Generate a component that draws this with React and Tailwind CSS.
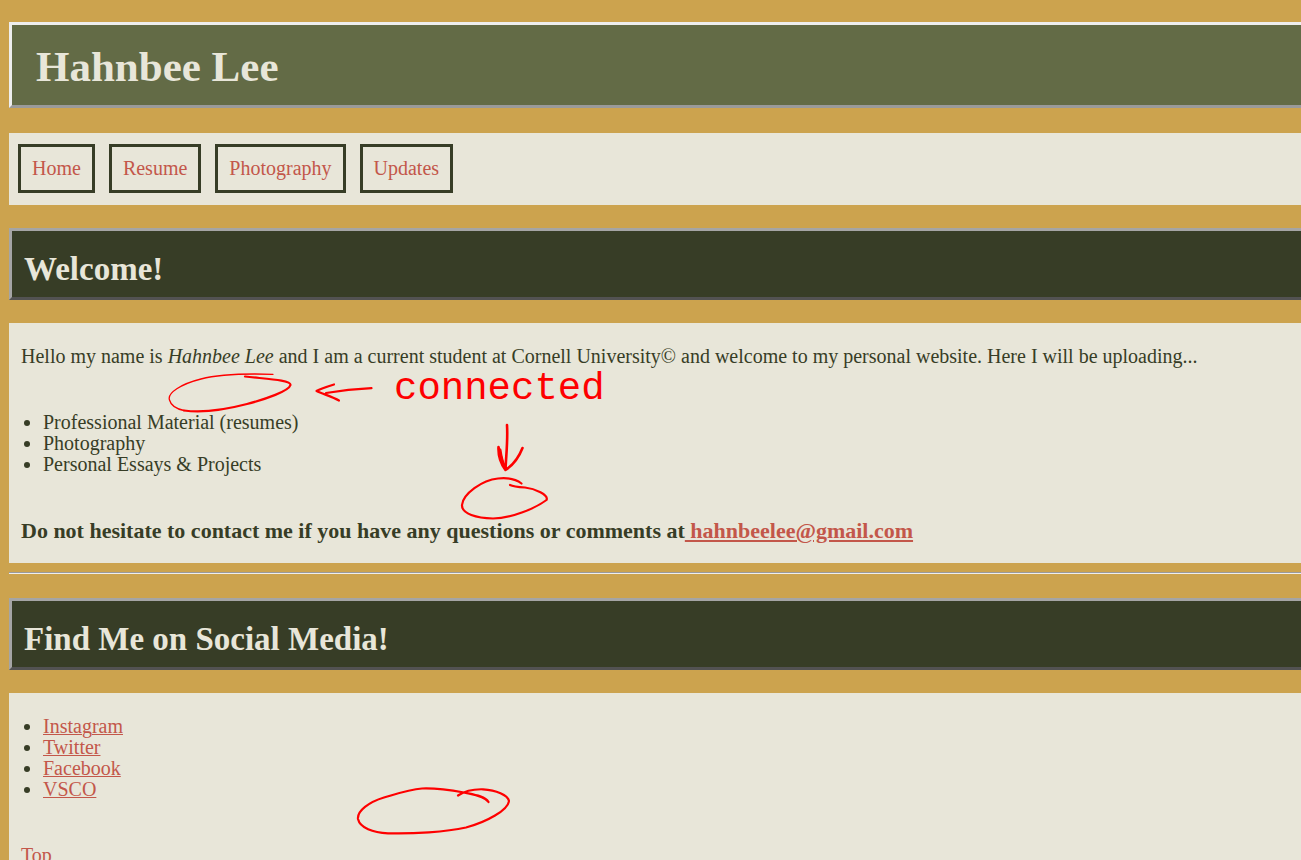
const pages = ["Home", "Resume", "Photography", "Updates"];
const uploads = ["Professional Material (resumes)", "Photography", "Personal Essays & Projects"];
const socials = ["Instagram", "Twitter", "Facebook", "VSCO"];

function SectionTitle({ children }) {
  return (
    <h2 className="border-[3px] border-r-0 border-t-[#a5a5a5] border-l-[#a5a5a5] border-b-[#525252] bg-[#373d26] px-3 pt-[19px] pb-[9px] text-[33px] leading-[38px] font-bold text-[#e8e6d9]">
      {children}
    </h2>
  );
}

function Annotations() {
  return (
    <div className="pointer-events-none absolute inset-0 overflow-hidden">
      <svg
        className="absolute top-0 left-0"
        width="640"
        height="860"
        fill="none"
        stroke="#fe0000"
        strokeWidth="2.200"
        strokeLinecap="round"
        strokeLinejoin="round"
        aria-hidden="true"
      >
        <path strokeWidth="1.3" d="M273 374.3C248 373.5 220 374 201 379C181 384 167 393 169.500 400C171 406 177 409 184 410.500" />
        <path d="M184 410.500C203 413 228 409 247 404C266 399 289 391 290.500 385C291 380 266 379 245 376.500" />
        <path d="M371.500 388.200C355 389 341 390.500 326 393M334 384.500C326 387 320 389 316.500 391C323 394 333 397 339 400.500" />
        <path strokeWidth="2.600" d="M507 425C508 441 506 456 505.500 470C501 464 498 457 498.500 447C500 453 502 463 505.500 470C513 465 519 457 522.500 448" />
        <path strokeWidth="3" d="M500 450C501 457 503 464 505 468" />
        <path d="M521.500 483.500C515 478.500 507 477.500 498 478.500C482 480 463 494 462 505C461.500 514 477 518 493 518.500C511 518.500 536 508 546.500 500C549 495 535 488.500 525 487.500C518 487 513 486.500 510 485" />
        <path d="M488.500 802C485 796 473 794.500 464 792.500C450 790 434 788 422 788.500C409 789.500 396 794 384 797.500C369 802 357 811 358 819C360 828 373 832.500 388 833.300C413 834 446 832 466 827.500C487 822 508 810 509 801C508 795 496 790 483 789.300C473 789 464 791.500 458 795.500" />
      </svg>
      <span className="absolute top-[367px] left-[394px] font-['Liberation_Mono',monospace] text-[39px] leading-[44px] text-[#fe0000]">
        connected
      </span>
    </div>
  );
}

export default function App() {
  return (
    <div className="relative min-h-screen bg-[#cca34e] pt-[22px] pl-[9px] font-['Liberation_Serif',serif] text-[20px] leading-[21px] text-[#373d26]">
      <header className="border-[3px] border-r-0 border-t-[#eeeeee] border-l-[#eeeeee] border-b-[#9a9a9a] bg-[#636b46] px-6 pt-[18px] pb-[14px]">
        <h1 className="text-[43px] leading-[48px] font-bold text-[#e8e6d9]">Hahnbee Lee</h1>
      </header>

      <nav className="mt-[25px] flex gap-[14px] bg-[#e8e6d9] px-[9px] pt-[11px] pb-3">
        {pages.map((page) => (
          <a key={page} href="#" className="border-[3px] border-[#373d26] px-[11px] py-[11px] text-[#c3574a]">
            {page}
          </a>
        ))}
      </nav>

      <main>
        <section className="mt-[23px]">
          <SectionTitle>Welcome!</SectionTitle>
          <div className="mt-[23px] flex flex-col gap-[45px] bg-[#e8e6d9] px-3 pt-[23px] pb-[22px]">
            <p>
              Hello my name is <em>Hahnbee Lee</em> and I am a current student at Cornell University© and welcome to my
              personal website. Here I will be uploading...
            </p>
            <ul className="list-disc pl-[22px]">
              {uploads.map((item) => (
                <li key={item}>{item}</li>
              ))}
            </ul>
            <p className="text-[22px] leading-[21px] font-bold">
              Do not hesitate to contact me if you have any questions or comments at
              <a href="mailto:hahnbeelee@gmail.com" className="whitespace-pre text-[#c3574a] underline">
                {" hahnbeelee@gmail.com"}
              </a>
            </p>
          </div>
        </section>

        <hr className="mt-[9px] border-t border-b border-t-[#9a9a9a] border-b-[#eeeeee]" />

        <section className="mt-6">
          <SectionTitle>Find Me on Social Media!</SectionTitle>
          <div className="mt-[23px] flex flex-col items-start gap-[45px] bg-[#e8e6d9] px-3 pt-[23px]">
            <ul className="list-disc pl-[22px]">
              {socials.map((name) => (
                <li key={name}>
                  <a href="#" className="text-[#c3574a] underline decoration-1">
                    {name}
                  </a>
                </li>
              ))}
            </ul>
            <a href="#" className="text-[#c3574a] underline decoration-1">
              Top
            </a>
          </div>
        </section>
      </main>

      <Annotations />
    </div>
  );
}
